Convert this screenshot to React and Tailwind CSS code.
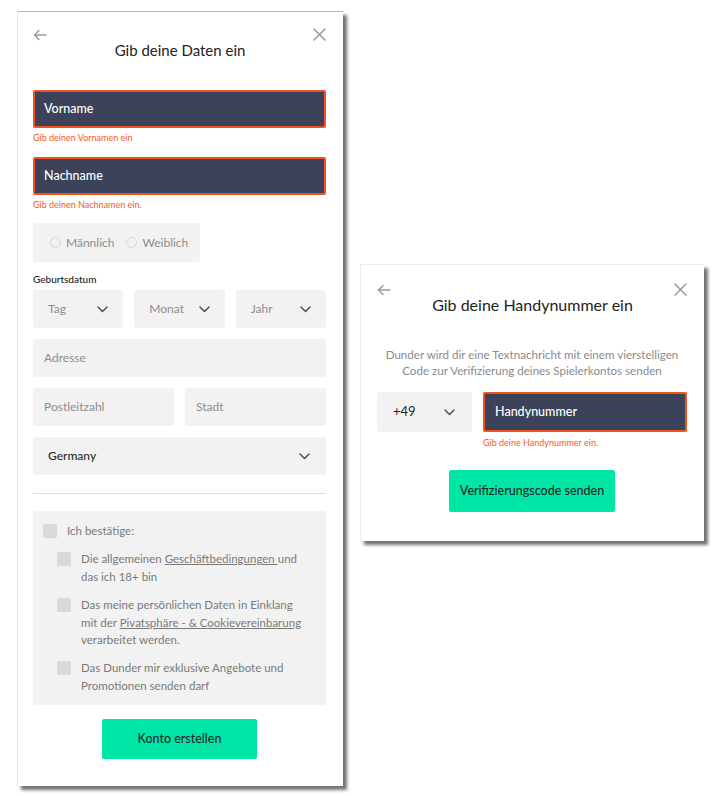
import React from 'react'

function ArrowLeft() {
  return (
    <svg width="14" height="12" viewBox="0 0 14 12" fill="none" stroke="#9a9a9a" strokeWidth="1.4" strokeLinecap="round" strokeLinejoin="round">
      <path d="M13 6H1.5" />
      <path d="M6 1.5L1.5 6L6 10.5" />
    </svg>
  )
}

function Close() {
  return (
    <svg width="13" height="13" viewBox="0 0 13 13" fill="none" stroke="#9a9a9a" strokeWidth="1.5" strokeLinecap="round">
      <path d="M1 1L12 12" />
      <path d="M12 1L1 12" />
    </svg>
  )
}

function Chevron() {
  return (
    <svg width="11" height="7" viewBox="0 0 11 7" fill="none" stroke="#555" strokeWidth="1.6" strokeLinecap="round" strokeLinejoin="round">
      <path d="M1 1L5.5 5.5L10 1" />
    </svg>
  )
}

function DarkInput({ label, error }) {
  return (
    <div>
      <div className="h-[38px] bg-[#3b4259] border-2 border-[#f0541c] rounded-[2px] flex items-center pl-[9px] text-white text-[12.5px] font-medium">
        {label}
      </div>
      <div className="mt-[4px] text-[9px] leading-[12px] text-[#f25a22]">{error}</div>
    </div>
  )
}

function GreyField({ label, className = '' }) {
  return (
    <div className={`h-[38px] bg-[#f2f2f2] rounded-[2px] flex items-center pl-[11px] text-[12px] text-[#8d8d8d] ${className}`}>
      {label}
    </div>
  )
}

function Select({ label, className = '', dark = false }) {
  return (
    <div className={`h-[38px] bg-[#f2f2f2] rounded-[2px] flex items-center justify-between pl-[15px] pr-[15px] text-[12px] ${dark ? 'text-[#2a2a2a] font-medium' : 'text-[#8d8d8d]'} ${className}`}>
      <span>{label}</span>
      <Chevron />
    </div>
  )
}

function Box({ className = '' }) {
  return <span className={`w-[14px] h-[14px] rounded-[2px] bg-[#d9d9d9] shrink-0 ${className}`} />
}

function Radio({ label }) {
  return (
    <span className="flex items-center gap-[5px]">
      <span className="w-[11px] h-[11px] rounded-full border border-[#d6d6d6]" />
      <span>{label}</span>
    </span>
  )
}

export default function App() {
  return (
    <div className="min-h-[796px] bg-white flex items-start pl-[17px] pt-[11px] gap-[17px]" style={{ fontFamily: 'Lato, "Noto Sans", sans-serif' }}>
      <div className="w-[326px] h-[775px] bg-white border-t border-t-[#b5b5b5] border-l border-l-[#e6e6e6] shadow-[4px_4px_3px_rgba(0,0,0,0.55)] pl-[15px] pt-[16px]">
        <div className="flex items-start justify-between w-[293px]">
          <div className="pt-[1px]"><ArrowLeft /></div>
          <div className="mt-[12px] text-[15px] leading-[20px] text-[#222]">Gib deine Daten ein</div>
          <Close />
        </div>

        <div className="w-[293px] mt-[30px]">
          <DarkInput label="Vorname" error="Gib deinen Vornamen ein" />
          <div className="mt-[13px]">
            <DarkInput label="Nachname" error="Gib deinen Nachnamen ein." />
          </div>

          <div className="mt-[12px] w-[167px] h-[39px] bg-[#f2f2f2] rounded-[2px] flex items-center gap-[12px] pl-[17px] text-[12px] text-[#8d8d8d]">
            <Radio label="Männlich" />
            <Radio label="Weiblich" />
          </div>

          <div className="mt-[10px] text-[10px] leading-[14px] text-[#222] font-medium">Geburtsdatum</div>

          <div className="mt-[4px] grid grid-cols-3 gap-[11px]">
            <Select label="Tag" />
            <Select label="Monat" />
            <Select label="Jahr" />
          </div>

          <GreyField label="Adresse" className="mt-[11px]" />

          <div className="mt-[11px] grid grid-cols-2 gap-[11px]">
            <GreyField label="Postleitzahl" />
            <GreyField label="Stadt" />
          </div>

          <Select label="Germany" dark className="mt-[11px] pr-[16px]" />

          <div className="mt-[18px] h-[1px] bg-[#dcdcdc]" />

          <div className="mt-[17px] h-[194px] bg-[#f2f2f2] rounded-[2px] pl-[10px] pt-[11px] text-[11.5px] leading-[18px] text-[#7a7a7a] whitespace-nowrap">
            <div className="flex items-center gap-[10px]">
              <Box />
              <span>Ich bestätige:</span>
            </div>
            <div className="pl-[14px] mt-[10px] flex flex-col gap-[10px]">
              <div className="flex items-start gap-[10px]">
                <Box className="mt-[2px]" />
                <span>Die allgemeinen <span className="underline">Geschäftbedingungen </span>und<br />das ich 18+ bin</span>
              </div>
              <div className="flex items-start gap-[10px]">
                <Box className="mt-[2px]" />
                <span className="leading-[17.5px]">Das meine persönlichen Daten in Einklang<br />mit der <span className="underline">Pivatsphäre - &amp; Cookievereinbarung</span><br />verarbeitet werden.</span>
              </div>
              <div className="flex items-start gap-[10px]">
                <Box className="mt-[2px]" />
                <span>Das Dunder mir exklusive Angebote und<br />Promotionen senden darf</span>
              </div>
            </div>
          </div>

          <div className="mt-[14px] flex justify-center">
            <button className="w-[155px] h-[40px] bg-[#00e6a6] rounded-[2px] text-[12.5px] font-medium text-[#1e2a28]">
              Konto erstellen
            </button>
          </div>
        </div>
      </div>

      <div className="mt-[253px] w-[344px] h-[277px] bg-white border-t border-t-[#ececec] border-l border-l-[#ececec] shadow-[4px_4px_3px_rgba(0,0,0,0.55)] pl-[16px] pr-[17px] pt-[18px]">
        <div className="flex items-start justify-between">
          <div className="pt-[1px]"><ArrowLeft /></div>
          <div className="mt-[12px] text-[16px] leading-[20px] text-[#222]">Gib deine Handynummer ein</div>
          <Close />
        </div>

        <div className="mt-[32px] text-center text-[11.6px] leading-[16px] text-[#8a8a8a]">
          Dunder wird dir eine Textnachricht mit einem vierstelligen<br />
          Code zur Verifizierung deines Spielerkontos senden
        </div>

        <div className="mt-[13px] flex gap-[11px]">
          <div className="w-[95px] h-[40px] bg-[#f2f2f2] rounded-[2px] flex items-center justify-between pl-[16px] pr-[17px] text-[13px] text-[#222]">
            <span>+49</span>
            <Chevron />
          </div>
          <div className="flex-1">
            <div className="h-[40px] bg-[#3b4259] border-2 border-[#f0541c] rounded-[2px] flex items-center pl-[10px] text-white text-[12.5px] font-medium">
              Handynummer
            </div>
            <div className="mt-[5px] text-[9px] leading-[12px] text-[#f25a22]">Gib deine Handynummer ein.</div>
          </div>
        </div>

        <div className="mt-[21px] flex justify-center">
          <button className="w-[166px] h-[42px] bg-[#00e6a6] rounded-[2px] text-[12.5px] font-medium text-[#1e2a28]">
            Verifizierungscode senden
          </button>
        </div>
      </div>
    </div>
  )
}
